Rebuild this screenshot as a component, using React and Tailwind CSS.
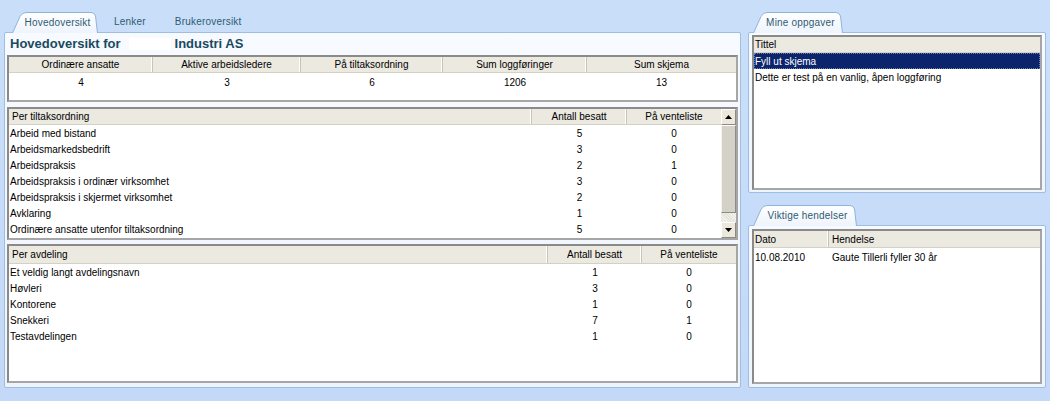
import React from "react";

const tiltak = [
  ["Arbeid med bistand", 5, 0],
  ["Arbeidsmarkedsbedrift", 3, 0],
  ["Arbeidspraksis", 2, 1],
  ["Arbeidspraksis i ordinær virksomhet", 3, 0],
  ["Arbeidspraksis i skjermet virksomhet", 2, 0],
  ["Avklaring", 1, 0],
  ["Ordinære ansatte utenfor tiltaksordning", 5, 0],
];

const avdeling = [
  ["Et veldig langt avdelingsnavn", 1, 0],
  ["Høvleri", 3, 0],
  ["Kontorene", 1, 0],
  ["Snekkeri", 7, 1],
  ["Testavdelingen", 1, 0],
];

function Tab({ label, w }) {
  return (
    <div className="relative z-10 -mb-px h-[21px] flex items-center justify-center" style={{ width: w }}>
      <svg className="absolute inset-0" width={w} height="21" viewBox={`0 0 ${w} 21`}>
        <defs>
          <linearGradient id="tabg" x1="0" y1="0" x2="0" y2="1">
            <stop offset="0" stopColor="#ffffff" />
            <stop offset="1" stopColor="#eef4fc" />
          </linearGradient>
        </defs>
        <path
          d={`M0.5 21 L8 4.5 Q10 0.5 14 0.5 L${w - 7} 0.5 Q${w - 3.5} 0.5 ${w - 2.5} 4 L${w - 0.5} 21`}
          fill="url(#tabg)"
          stroke="#91b2da"
          strokeWidth="1"
        />
      </svg>
      <span className="relative pl-[5px] text-[10px] text-[#2f5a72] tracking-[0.2px]">{label}</span>
    </div>
  );
}

function HeadCell({ children, className = "" }) {
  return (
    <div className={`h-full flex items-center border-r border-[#c9c5b6] shadow-[inset_-1px_0_0_#ffffff] ${className}`}>
      {children}
    </div>
  );
}

const boxCls =
  "border-2 border-t-[#8a8a8a] border-l-[#8a8a8a] border-r-[#a6a6a6] border-b-[#a6a6a6] bg-white";
const headRow = "h-[16px] bg-[#ebe9e0] border-b border-[#d3d0c4] text-[10px] text-black";

function ScrollBar() {
  return (
    <div className="w-[15px] flex flex-col bg-[#f1efe7]">
      <div className="h-[16px] bg-[#ece9dc] border border-t-white border-l-white border-r-[#8d8b84] border-b-[#8d8b84] flex items-center justify-center">
        <svg width="7" height="4" viewBox="0 0 7 4"><path d="M0 4 L3.5 0 L7 4 Z" fill="#000" /></svg>
      </div>
      <div className="h-[88px] bg-[#d4d1c8] border border-t-white border-l-[#f4f3ee] border-r-[#8d8b84] border-b-[#8d8b84]" />
      <div className="flex-1 bg-[repeating-linear-gradient(45deg,#f3f2ec_0px,#f3f2ec_1px,#e3e1d9_1px,#e3e1d9_2px)]" />
      <div className="h-[16px] bg-[#ece9dc] border border-t-white border-l-white border-r-[#8d8b84] border-b-[#8d8b84] flex items-center justify-center">
        <svg width="7" height="4" viewBox="0 0 7 4"><path d="M0 0 L3.5 4 L7 0 Z" fill="#000" /></svg>
      </div>
    </div>
  );
}

export default function App() {
  return (
    <div className="w-[1050px] h-[401px] overflow-hidden bg-[linear-gradient(#c9dff9,#c3d9f7)] flex pl-[4px] pt-[11px] font-['Liberation_Sans',Arial,sans-serif] text-black">
      {/* LEFT */}
      <div className="w-[737px] flex flex-col">
        <div className="h-[21px] flex items-end pl-[8px]">
          <Tab label="Hovedoversikt" w={86} />
          <div className="h-[21px] flex items-center pl-[16px] text-[10px] text-[#2f5a72] tracking-[0.2px]">Lenker</div>
          <div className="h-[21px] flex items-center pl-[29px] text-[10px] text-[#2f5a72] tracking-[0.2px]">Brukeroversikt</div>
        </div>
        <div className="h-[356px] bg-[linear-gradient(#f7faff,#eef4fc)] border border-[#9fbde3] rounded-[2px] px-[2px] flex flex-col">
          <div className="h-[21px] flex items-center pl-[3px] text-[13px] font-bold text-[#1b4a5e]">
            <span>Hovedoversikt for</span>
            <span className="inline-block w-[42px] h-[12px] bg-white ml-[8px] mr-[4px]" />
            <span>Industri AS</span>
          </div>
          {/* summary */}
          <div className={`${boxCls} h-[47px] mt-[1px]`}>
            <div className={`${headRow} grid grid-cols-[144px_148px_142px_144px_1fr] h-[15px]`}>
              <HeadCell className="justify-center">Ordinære ansatte</HeadCell>
              <HeadCell className="justify-center">Aktive arbeidsledere</HeadCell>
              <HeadCell className="justify-center">På tiltaksordning</HeadCell>
              <HeadCell className="justify-center">Sum loggføringer</HeadCell>
              <div className="h-full flex items-center justify-center">Sum skjema</div>
            </div>
            <div className="grid grid-cols-[144px_148px_142px_144px_1fr] h-[18px] items-center text-[10px]">
              <div className="text-center">4</div>
              <div className="text-center">3</div>
              <div className="text-center">6</div>
              <div className="text-center">1206</div>
              <div className="text-center">13</div>
            </div>
          </div>
          {/* per tiltaksordning */}
          <div className={`${boxCls} h-[133px] mt-[5px] flex`}>
            <div className="flex-1 flex flex-col">
              <div className={`${headRow} grid grid-cols-[1fr_95px_94px]`}>
                <HeadCell className="pl-[3px]">Per tiltaksordning</HeadCell>
                <HeadCell className="justify-center">Antall besatt</HeadCell>
                <div className="h-full flex items-center justify-center">På venteliste</div>
              </div>
              {tiltak.map(([n, a, v]) => (
                <div key={n} className="grid grid-cols-[1fr_95px_94px] h-[16px] items-center text-[10px]">
                  <div className="pl-[1px]">{n}</div>
                  <div className="text-center">{a}</div>
                  <div className="text-center">{v}</div>
                </div>
              ))}
            </div>
            <ScrollBar />
          </div>
          {/* per avdeling */}
          <div className={`${boxCls} h-[139px] mt-[4px]`}>
            <div className={`${headRow} grid grid-cols-[1fr_94px_94px] h-[18px]`}>
              <HeadCell className="pl-[3px]">Per avdeling</HeadCell>
              <HeadCell className="justify-center">Antall besatt</HeadCell>
              <div className="h-full flex items-center justify-center">På venteliste</div>
            </div>
            {avdeling.map(([n, a, v]) => (
              <div key={n} className="grid grid-cols-[1fr_94px_94px] h-[16px] items-center text-[10px]">
                <div className="pl-[1px]">{n}</div>
                <div className="text-center">{a}</div>
                <div className="text-center">{v}</div>
              </div>
            ))}
          </div>
        </div>
      </div>

      {/* RIGHT */}
      <div className="w-[298px] ml-[7px] flex flex-col">
        <div className="h-[21px] flex items-end pl-[5px]">
          <Tab label="Mine oppgaver" w={90} />
        </div>
        <div className="h-[161px] bg-[linear-gradient(#f7faff,#eef4fc)] border border-[#9fbde3] rounded-[2px] px-[3px] pt-[2px]">
          <div className={`${boxCls} h-[155px]`}>
            <div className={`${headRow} flex items-center pl-[1px]`}>Tittel</div>
            <div className="h-[16px] bg-[#0b246b] text-white text-[10px] flex items-center pl-[1px] outline outline-1 outline-dotted outline-[#6b7fb3] -outline-offset-1">Fyll ut skjema</div>
            <div className="h-[16px] text-[10px] flex items-center pl-[1px]">Dette er test på en vanlig, åpen loggføring</div>
          </div>
        </div>
        <div className="h-[21px] mt-[11px] flex items-end pl-[5px]">
          <Tab label="Viktige hendelser" w={104} />
        </div>
        <div className="h-[163px] bg-[linear-gradient(#f7faff,#eef4fc)] border border-[#9fbde3] rounded-[2px] px-[3px] pt-[3px]">
          <div className={`${boxCls} h-[155px]`}>
            <div className={`${headRow} h-[17px] grid grid-cols-[75px_1fr]`}>
              <HeadCell className="pl-[1px]">Dato</HeadCell>
              <div className="h-full flex items-center pl-[3px]">Hendelse</div>
            </div>
            <div className="grid grid-cols-[75px_1fr] h-[18px] items-center text-[10px]">
              <div className="pl-[1px]">10.08.2010</div>
              <div className="pl-[3px]">Gaute Tillerli fyller 30 år</div>
            </div>
          </div>
        </div>
      </div>
    </div>
  );
}
